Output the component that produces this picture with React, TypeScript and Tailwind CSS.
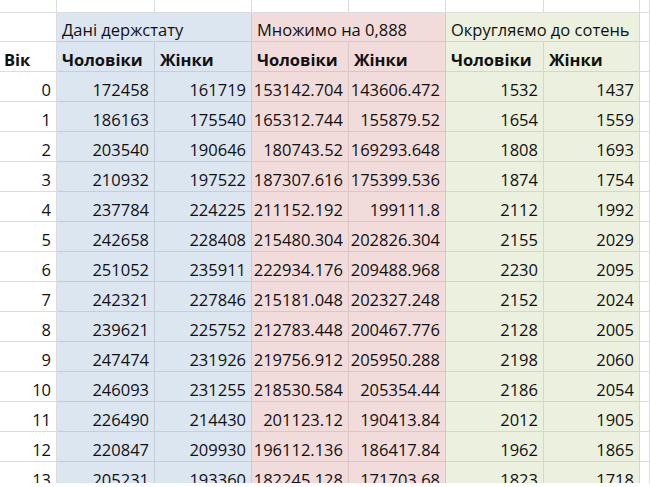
const rows: [number, string, string, string, string, string, string][] = [
  [0, '172458', '161719', '153142.704', '143606.472', '1532', '1437'],
  [1, '186163', '175540', '165312.744', '155879.52', '1654', '1559'],
  [2, '203540', '190646', '180743.52', '169293.648', '1808', '1693'],
  [3, '210932', '197522', '187307.616', '175399.536', '1874', '1754'],
  [4, '237784', '224225', '211152.192', '199111.8', '2112', '1992'],
  [5, '242658', '228408', '215480.304', '202826.304', '2155', '2029'],
  [6, '251052', '235911', '222934.176', '209488.968', '2230', '2095'],
  [7, '242321', '227846', '215181.048', '202327.248', '2152', '2024'],
  [8, '239621', '225752', '212783.448', '200467.776', '2128', '2005'],
  [9, '247474', '231926', '219756.912', '205950.288', '2198', '2060'],
  [10, '246093', '231255', '218530.584', '205354.44', '2186', '2054'],
  [11, '226490', '214430', '201123.12', '190413.84', '2012', '1905'],
  [12, '220847', '209930', '196112.136', '186417.84', '1962', '1865'],
  [13, '205231', '193360', '182245.128', '171703.68', '1823', '1718'],
];

const cols = 'grid grid-cols-[57px_98px_97px_97px_97px_98px_96px_1fr]';
const white = 'border-r border-b border-[#dadcdd] bg-white';
const blue = 'border-r border-b border-[#c5cfda] bg-[#dce6f1]';
const pink = 'border-r border-b border-[#dcc6c5] bg-[#f2dcdb]';
const green = 'border-r border-b border-[#d2d9c6] bg-[#ebf1de]';
const cell = 'flex items-end pb-[3px] px-[5px] whitespace-nowrap overflow-visible';
const num = 'flex items-end justify-end pb-[3px] pr-[5px] whitespace-nowrap';

export default function App() {
  return (
    <div className="w-[650px] h-[487px] bg-white overflow-hidden">
      <div
        className="h-[483px] overflow-hidden text-[16.5px] leading-none text-[#111]"
        style={{ fontFamily: '"Open Sans", "Noto Sans", sans-serif' }}
      >
        {/* top partial row */}
        <div className={`${cols} h-[13px]`}>
          {Array.from({ length: 8 }).map((_, i) => (
            <div key={i} className={white}></div>
          ))}
        </div>

        {/* group headers */}
        <div className={`${cols} h-[29px]`}>
          <div className={white}></div>
          <div className={`${blue} ${cell} col-span-2`}>Дані держстату</div>
          <div className={`${pink} ${cell} col-span-2`}>Множимо на 0,888</div>
          <div className={`${green} ${cell} col-span-2`}>Округляємо до сотень</div>
          <div className={white}></div>
        </div>

        {/* column headers */}
        <div className={`${cols} h-[30px] font-bold`}>
          <div className={`${white} ${cell} pl-[4px]`}>Вік</div>
          <div className={`${blue} ${cell}`}>Чоловіки</div>
          <div className={`${blue} ${cell}`}>Жінки</div>
          <div className={`${pink} ${cell}`}>Чоловіки</div>
          <div className={`${pink} ${cell}`}>Жінки</div>
          <div className={`${green} ${cell}`}>Чоловіки</div>
          <div className={`${green} ${cell}`}>Жінки</div>
          <div className={white}></div>
        </div>

        {rows.map((r) => (
          <div key={r[0]} className={`${cols} h-[30px] shrink-0`}>
            <div className={`${white} ${num}`}>{r[0]}</div>
            <div className={`${blue} ${num}`}>{r[1]}</div>
            <div className={`${blue} ${num}`}>{r[2]}</div>
            <div className={`${pink} ${num} pr-[3px]`}>{r[3]}</div>
            <div className={`${pink} ${num} pr-[3px]`}>{r[4]}</div>
            <div className={`${green} ${num}`}>{r[5]}</div>
            <div className={`${green} ${num}`}>{r[6]}</div>
            <div className={white}></div>
          </div>
        ))}
      </div>
    </div>
  );
}
